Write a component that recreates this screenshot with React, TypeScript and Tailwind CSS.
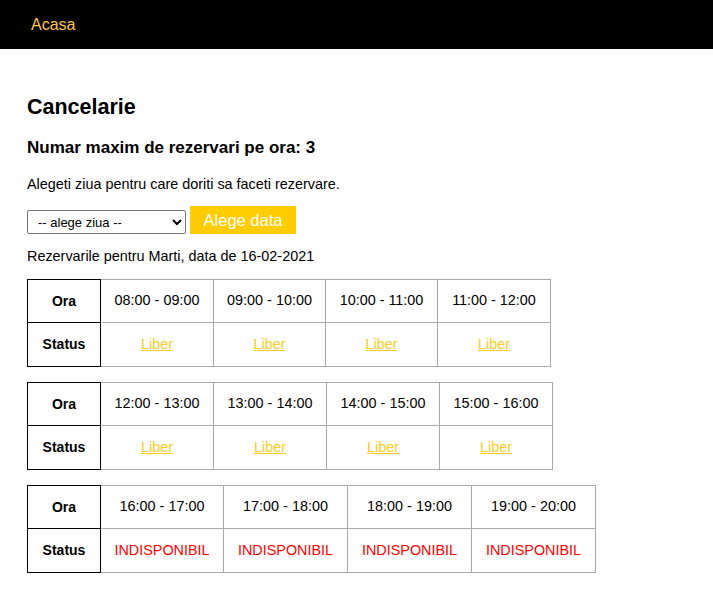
import React from "react";

type Slot = { time: string; status: "free" | "busy" };

const tables: { widths: number[]; slots: Slot[] }[] = [
  {
    widths: [74, 113, 112, 112, 113],
    slots: [
      { time: "08:00 - 09:00", status: "free" },
      { time: "09:00 - 10:00", status: "free" },
      { time: "10:00 - 11:00", status: "free" },
      { time: "11:00 - 12:00", status: "free" },
    ],
  },
  {
    widths: [74, 113, 113, 113, 113],
    slots: [
      { time: "12:00 - 13:00", status: "free" },
      { time: "13:00 - 14:00", status: "free" },
      { time: "14:00 - 15:00", status: "free" },
      { time: "15:00 - 16:00", status: "free" },
    ],
  },
  {
    widths: [74, 123, 124, 124, 124],
    slots: [
      { time: "16:00 - 17:00", status: "busy" },
      { time: "17:00 - 18:00", status: "busy" },
      { time: "18:00 - 19:00", status: "busy" },
      { time: "19:00 - 20:00", status: "busy" },
    ],
  },
];

function SlotTable({ widths, slots }: { widths: number[]; slots: Slot[] }) {
  return (
    <div className="flex">
      <div className="flex flex-col" style={{ width: widths[0] }}>
        <div className="h-[44px] border border-black flex items-center justify-center font-bold text-[14px] text-black">
          Ora
        </div>
        <div className="h-[44px] border-x border-b border-black flex items-center justify-center font-bold text-[14px] text-black">
          Status
        </div>
      </div>
      {slots.map((s, i) => (
        <div key={i} className="flex flex-col" style={{ width: widths[i + 1] }}>
          <div className="h-[44px] border-y border-r border-[#aaaaaa] flex items-center justify-center text-[14.4px] text-black">
            {s.time}
          </div>
          <div className="h-[44px] border-b border-r border-[#aaaaaa] flex items-center justify-center text-[14.4px]">
            {s.status === "free" ? (
              <a href="#" className="text-[#ffcc22] underline">
                Liber
              </a>
            ) : (
              <span className="text-[#ff0000]">INDISPONIBIL</span>
            )}
          </div>
        </div>
      ))}
    </div>
  );
}

export default function App() {
  return (
    <div className="min-h-[603px] bg-white font-['Liberation_Sans',Arial,sans-serif] text-black">
      <header className="h-[49px] bg-black flex items-center px-[31px]">
        <a href="#" className="text-[#ffc34d] text-[16px]">
          Acasa
        </a>
      </header>
      <main className="pl-[27px] pb-[30px]">
        <h2 className="mt-[45px] text-[21.5px] leading-[26px] font-bold">Cancelarie</h2>
        <h3 className="mt-[18px] text-[17px] leading-[20px] font-bold">
          Numar maxim de rezervari pe ora: 3
        </h3>
        <p className="mt-[18px] text-[14.4px] leading-[16px]">
          Alegeti ziua pentru care doriti sa faceti rezervare.
        </p>
        <div className="mt-[14px] flex items-end gap-[4px]">
          <select className="w-[159px] h-[24px] border border-[#767676] rounded-[2px] bg-white text-[13px] pl-[6px] text-black">
            <option>-- alege ziua --</option>
          </select>
          <button className="h-[28px] w-[106px] bg-[#ffcc00] text-white text-[16.5px] flex items-center justify-center">
            Alege data
          </button>
        </div>
        <p className="mt-[14px] text-[14.4px] leading-[16px]">
          Rezervarile pentru Marti, data de 16-02-2021
        </p>
        <div className="mt-[15px] flex flex-col gap-[15px]">
          {tables.map((t, i) => (
            <SlotTable key={i} widths={t.widths} slots={t.slots} />
          ))}
        </div>
      </main>
    </div>
  );
}
